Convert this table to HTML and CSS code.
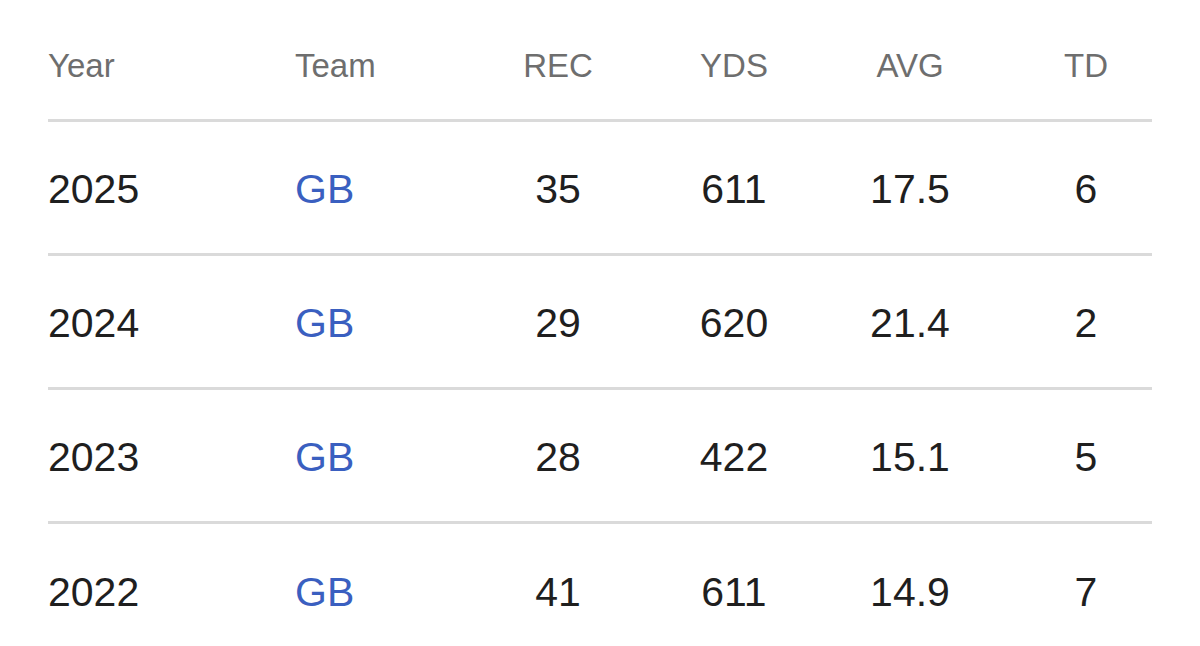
FILE: index.html
```html
<!DOCTYPE html>
<html>
<head>
<meta charset="utf-8">
<link rel="stylesheet" href="styles.css">
</head>
<body>
<div class="stats">
  <div class="row head">
    <div class="cell left">Year</div>
    <div class="cell left">Team</div>
    <div class="cell">REC</div>
    <div class="cell">YDS</div>
    <div class="cell">AVG</div>
    <div class="cell last">TD</div>
  </div>
  <div class="row">
    <div class="cell left">2025</div>
    <div class="cell left team">GB</div>
    <div class="cell">35</div>
    <div class="cell">611</div>
    <div class="cell">17.5</div>
    <div class="cell last">6</div>
  </div>
  <div class="row">
    <div class="cell left">2024</div>
    <div class="cell left team">GB</div>
    <div class="cell">29</div>
    <div class="cell">620</div>
    <div class="cell">21.4</div>
    <div class="cell last">2</div>
  </div>
  <div class="row">
    <div class="cell left">2023</div>
    <div class="cell left team">GB</div>
    <div class="cell">28</div>
    <div class="cell">422</div>
    <div class="cell">15.1</div>
    <div class="cell last">5</div>
  </div>
  <div class="row end">
    <div class="cell left">2022</div>
    <div class="cell left team">GB</div>
    <div class="cell">41</div>
    <div class="cell">611</div>
    <div class="cell">14.9</div>
    <div class="cell last">7</div>
  </div>
</div>
</body>
</html>
```
FILE: styles.css
```css
html, body {
  margin: 0;
  padding: 0;
  background: #ffffff;
}
body {
  font-family: "Liberation Sans", Arial, sans-serif;
  color: #1f1f1f;
  overflow: hidden;
}
.stats {
  width: 1104px;
  margin-left: 48px;
}
.row {
  display: grid;
  grid-template-columns: 247px 175px 176px 176px 176px 154px;
  align-items: center;
  box-sizing: border-box;
  height: 134px;
  padding-top: 2px;
  border-bottom: 3px solid #dadada;
  font-size: 41px;
  line-height: 48px;
}
.row.end {
  border-bottom: none;
}
.row.head {
  height: 122px;
  padding-top: 0;
  align-items: end;
  font-size: 33px;
  line-height: 40px;
  color: #6e6e6e;
}
.row.head .cell {
  padding-bottom: 33px;
}
.cell {
  text-align: center;
  white-space: nowrap;
}
.cell.left {
  text-align: left;
}
.cell.last {
  padding-left: 22px;
}
.team {
  color: #3a5fc0;
}
```
